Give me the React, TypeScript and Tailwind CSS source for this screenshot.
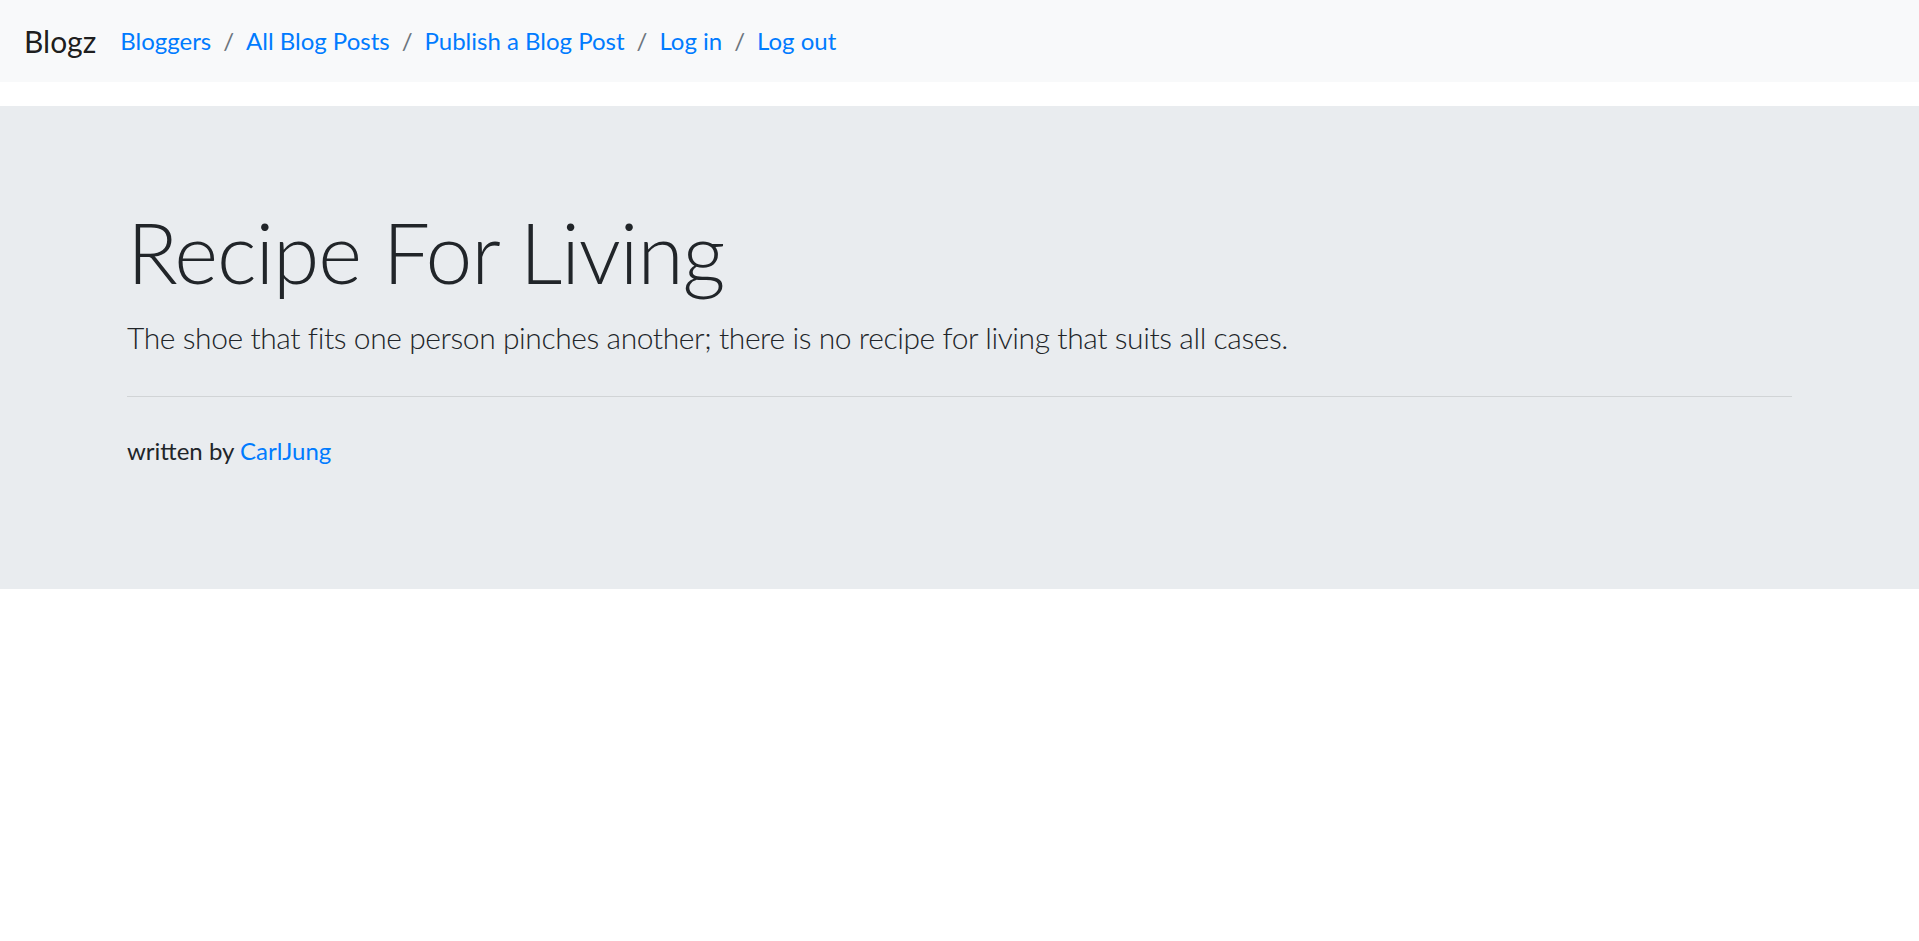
import React from "react"

const links = ["Bloggers", "All Blog Posts", "Publish a Blog Post", "Log in", "Log out"]

export default function App() {
    return (
        <div className="min-h-screen bg-white text-[#212529] font-['Segoe_UI','Lato','Liberation_Sans',sans-serif] text-[24px]">
            {/* NAVBAR */}
            <nav className="h-[82px] bg-[#f8f9fa] flex items-center px-6">
                <a href="#" className="text-[30px] text-black/90 mr-6 leading-none">Blogz</a>
                <div className="flex items-center gap-3">
                    {links.map((l, i) => (
                        <React.Fragment key={l}>
                            {i > 0 && <span className="text-[#6c757d]">/</span>}
                            <a href="#" className="text-[#007bff]">{l}</a>
                        </React.Fragment>
                    ))}
                </div>
            </nav>
            {/* JUMBOTRON */}
            <section className="mt-6 bg-[#e9ecef] px-[127px] pt-[96px] pb-[96px]">
                <h1 className="text-[84px] font-light leading-[1.2] mb-3 tracking-[-0.013em]">Recipe For Living</h1>
                <p className="text-[30px] font-light leading-normal mb-6 tracking-[-0.014em]">
                    The shoe that fits one person pinches another; there is no recipe for living that suits all cases.
                </p>
                <hr className="my-9 border-t border-black/10" />
                <p className="leading-normal mb-6">
                    written by <a href="#" className="text-[#007bff]">CarlJung</a>
                </p>
            </section>
        </div>
    )
}
